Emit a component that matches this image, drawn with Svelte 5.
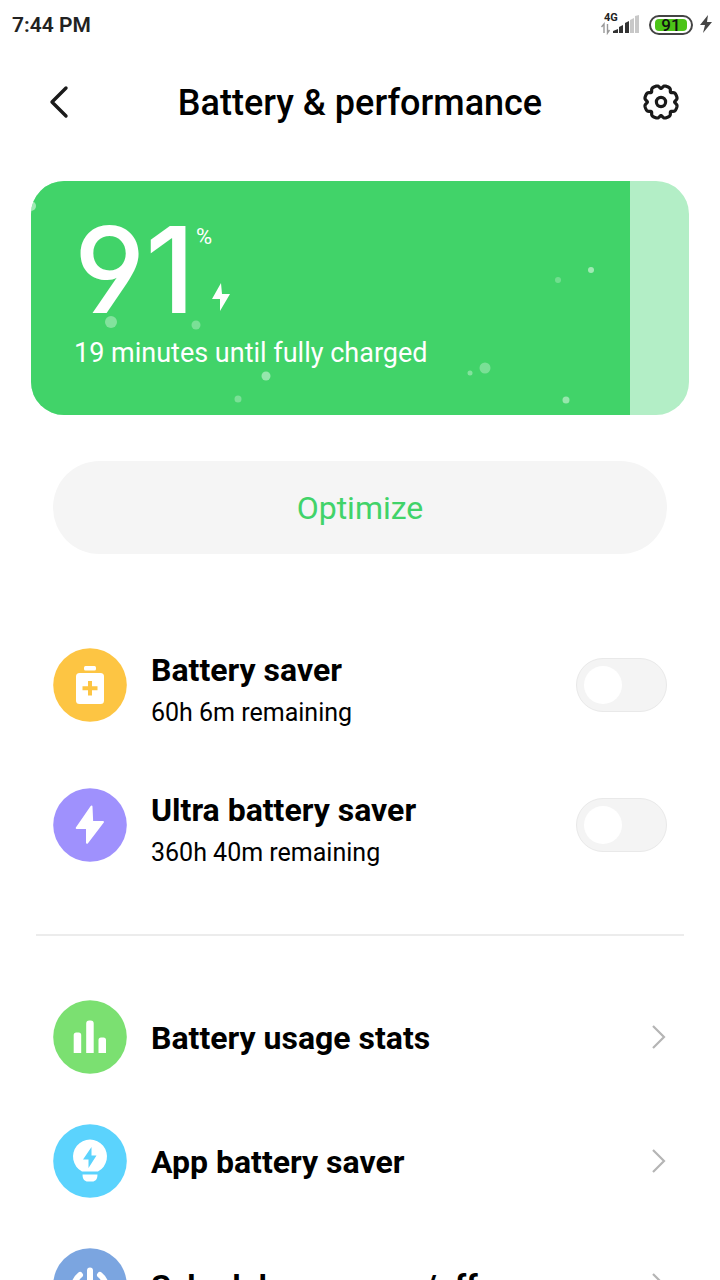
<div class="screen">
    <div class="status">
        <span class="time">{time}</span>
        <div class="status-icons">
            <div class="network">
                <span class="net-type">4G</span>
                <svg width="38" height="20" viewBox="0 0 38 20" aria-hidden="true">
                    <path d="M3 18V9L0.5 12M6.5 9v9l2-3" fill="none" stroke="#999" stroke-width="1.4" />
                    <path d="M12 18v-2l5-2v4zM18 18v-6l4-2v8zM24 18V8l4-2v12z" fill="#333" />
                    <path d="M29 18V5l4-2v15zM34 18V1l4-1v18z" fill="#c8c8c8" />
                </svg>
            </div>
            <div class="pill">
                <div class="pill-fill">{level}</div>
            </div>
            <svg width="12" height="20" viewBox="0 0 12 20" aria-hidden="true">
                <path d="M8 0L0 10h5L3 18L12 7H7z" fill="#444" />
            </svg>
        </div>
    </div>

    <header>
        <button class="icon-btn" aria-label="Back">
            <svg width="38" height="38" viewBox="0 0 38 38">
                <path d="M26 4L12 18L26 32" fill="none" stroke="#1a1a1a" stroke-width="3.4" stroke-linecap="round" stroke-linejoin="round" />
            </svg>
        </button>
        <h1>Battery &amp; performance</h1>
        <button class="icon-btn" aria-label="Settings">
            <svg width="38" height="38" viewBox="-19 -18 38 38">
                <path d={gear} fill="none" stroke="#1a1a1a" stroke-width="3.2" stroke-linejoin="round" />
                <circle r="4.6" fill="none" stroke="#1a1a1a" stroke-width="3.2" />
            </svg>
        </button>
    </header>

    <main>
        <section class="card">
            <div class="charge" style="width: {level}%"></div>
            <svg class="bubbles" viewBox="0 0 658 234" aria-hidden="true">
                {#each bubbles as b}
                    <circle cx={b.x} cy={b.y} r={b.r} fill="#fff" opacity={b.o} />
                {/each}
            </svg>
            <div class="card-text">
                <div class="level">
                    <span class="number">{level}</span>
                    <div class="level-side">
                        <span class="percent">%</span>
                        <svg width="18" height="28" viewBox="0 0 18 28" aria-hidden="true">
                            <path d="M9 0L0 16h8v12L18 11h-8z" fill="#fff" />
                        </svg>
                    </div>
                </div>
                <p>19 minutes until fully charged</p>
            </div>
        </section>

        <button class="optimize">Optimize</button>

        <div class="savers">
            {#each savers as saver}
                <label class="saver">
                    {@render icon(saver.icon)}
                    <span class="text">
                        <span class="name">{saver.name}</span>
                        <span class="remaining">{saver.remaining}</span>
                    </span>
                    <input type="checkbox" role="switch" bind:checked={saver.on}>
                </label>
            {/each}
        </div>

        <hr>

        <nav>
            {#each links as link}
                <a href="#{link.icon}">
                    {@render icon(link.icon)}
                    <span class="name">{link.name}</span>
                    <svg class="chevron" width="16" height="28" viewBox="0 0 16 28" aria-hidden="true">
                        <path d="M2 3L13 14L2 25" fill="none" stroke="#b5b5b5" stroke-width="2.2" />
                    </svg>
                </a>
            {/each}
        </nav>
    </main>
</div>

{#snippet icon(kind)}
    <svg class="icon" width="74" height="74" viewBox="0 0 74 74" aria-hidden="true">
        <circle cx="37" cy="37" r="36.8" fill={colors[kind]} />
        {#if kind === "saver"}
            <rect x="31" y="18" width="12" height="4.5" rx="1.5" fill="#fff" />
            <rect x="23" y="25" width="28" height="31" rx="3.5" fill="#fff" />
            <path d="M37 33v14.5M29.5 40.2h15" stroke={colors[kind]} stroke-width="4" />
        {:else if kind === "ultra"}
            <path d="M38.5 18.5L23.7 40H34v14.8L50 34H39.2z" fill="#fff" stroke="#fff" stroke-width="2" stroke-linejoin="round" />
        {:else if kind === "stats"}
            <path d="M20.7 53V35a2.5 2.5 0 0 1 2.5-2.5h2.5a2.5 2.5 0 0 1 2.5 2.5v18zM33.2 53V23.5a3 3 0 0 1 3-3h1.5a3 3 0 0 1 3 3V53zM45.5 53V40a2.5 2.5 0 0 1 2.5-2.5h2.5a2.5 2.5 0 0 1 2.5 2.5v13z" fill="#fff" />
        {:else if kind === "apps"}
            <path d="M29 47.5a17 17 0 1 1 16 0z" fill="#fff" />
            <path d="M29.5 50.5h15c0 5-2.5 7-5 7h-5c-2.5 0-5-2-5-7z" fill="#fff" />
            <path d="M38.5 23L30 35.5h5.5V44L43.5 31.5h-5z" fill={colors[kind]} />
        {:else}
            <path d="M37 22.5v15M27 27a16 16 0 1 0 20 0" fill="none" stroke="#fff" stroke-width="6" stroke-linecap="round" />
        {/if}
    </svg>
{/snippet}

<style>
    :global(body){
        margin: 0;
        background: #fff;
    }

    .screen{
        display: flex;
        flex-direction: column;
        height: 100vh;
        font-family: Roboto, sans-serif;
        color: #000;
    }

    button{
        border: 0;
        padding: 0;
        font-family: inherit;
        cursor: pointer;
    }

    .status{
        display: flex;
        flex: none;
        align-items: center;
        justify-content: space-between;
        height: 50px;
        padding: 0 8px 0 12px;
    }

    .time{
        font-size: 21px;
        font-weight: 600;
        color: #222;
    }

    .status-icons{
        display: flex;
        align-items: center;
        gap: 7px;
    }

    .network{
        position: relative;
        display: flex;
        margin-right: 3px;
    }

    .net-type{
        position: absolute;
        top: -3px;
        left: 3px;
        font-size: 11px;
        line-height: 12px;
        font-weight: 700;
        color: #222;
    }

    .pill{
        box-sizing: border-box;
        width: 44px;
        height: 20px;
        padding: 2px 4px;
        border: 2px solid #444;
        border-radius: 10px;
    }

    .pill-fill{
        height: 12px;
        border-radius: 4px;
        background: #4cc417;
        color: #111;
        font-size: 17px;
        line-height: 13px;
        font-weight: 500;
        text-align: center;
    }

    header{
        display: flex;
        flex: none;
        align-items: center;
        justify-content: space-between;
        height: 106px;
        padding: 0 40px;
    }

    h1{
        margin: 0;
        font-size: 36px;
        line-height: 44px;
        font-weight: 500;
    }

    .icon-btn{
        display: flex;
        background: none;
    }

    main{
        flex: 1;
        overflow-y: auto;
        scrollbar-width: none;
        padding: 25px 31px;
    }

    .card{
        position: relative;
        height: 234px;
        border-radius: 33px;
        overflow: hidden;
        background: #b3eec6;
        color: #fff;
    }

    .charge{
        position: absolute;
        inset: 0 auto 0 0;
        background: #41d369;
    }

    .bubbles{
        position: absolute;
        inset: 0;
    }

    .card-text{
        position: relative;
        padding: 32px 43px;
    }

    .level{
        display: flex;
        gap: 1px;
        height: 120px;
    }

    .number{
        font-family: Inter, sans-serif;
        font-feature-settings: "cv04";
        font-size: 120px;
        line-height: 114px;
        font-weight: 500;
    }

    .level-side{
        display: flex;
        flex-direction: column;
        justify-content: space-between;
        padding: 12px 0 22px;
    }

    .level-side svg{
        margin-left: 16px;
    }

    .percent{
        font-size: 22px;
        line-height: 24px;
    }

    .card p{
        margin: 0;
        font-size: 27px;
        line-height: 40px;
    }

    .optimize{
        display: block;
        width: calc(100% - 44px);
        height: 93px;
        margin: 46px 22px 0;
        border-radius: 47px;
        background: #f5f5f5;
        color: #41d369;
        font-size: 32px;
    }

    .savers{
        padding: 61px 22px 39px;
    }

    .saver, nav a{
        display: flex;
        align-items: center;
        gap: 24px;
    }

    .saver{
        height: 140px;
    }

    .icon{
        flex: none;
    }

    .text, nav .name{
        flex: 1;
    }

    .text{
        padding-top: 11px;
    }

    .name, .remaining{
        display: block;
    }

    .name{
        font-size: 32px;
        line-height: 44px;
        font-weight: 700;
    }

    .remaining{
        font-size: 25px;
        line-height: 42px;
    }

    nav .name{
        padding-top: 1px;
    }

    input{
        appearance: none;
        box-sizing: border-box;
        width: 91px;
        height: 54px;
        margin: 0;
        padding: 7px;
        border: 1px solid #e9e9e9;
        border-radius: 27px;
        background: #f4f4f4;
    }

    input::before{
        content: "";
        display: block;
        width: 38px;
        height: 38px;
        border-radius: 50%;
        background: #fff;
    }

    input:checked{
        background: #41d369;
    }

    input:checked::before{
        margin-left: auto;
    }

    hr{
        height: 2px;
        margin: 0 5px;
        border: 0;
        background: #ececec;
    }

    nav{
        padding: 39px 22px;
    }

    nav a{
        height: 124px;
        color: inherit;
        text-decoration: none;
    }
</style>

<script>
    const time = "7:44 PM";
    const level = 91;

    const colors = {
        saver: "#fdc543",
        ultra: "#9f91fd",
        stats: "#7be071",
        apps: "#5bd3fd",
        schedule: "#7ba5e0"
    };

    let savers = $state([
        { icon: "saver", name: "Battery saver", remaining: "60h 6m remaining", on: false },
        { icon: "ultra", name: "Ultra battery saver", remaining: "360h 40m remaining", on: false }
    ]);

    const links = [
        { icon: "stats", name: "Battery usage stats" },
        { icon: "apps", name: "App battery saver" },
        { icon: "schedule", name: "Schedule power on/off" }
    ];

    const bubbles = [
        { x: 0, y: 25, r: 5, o: 0.5 },
        { x: 80, y: 141, r: 6, o: 0.35 },
        { x: 165, y: 144, r: 4.5, o: 0.3 },
        { x: 235, y: 195, r: 4.5, o: 0.45 },
        { x: 207, y: 218, r: 3.5, o: 0.3 },
        { x: 439, y: 192, r: 2.5, o: 0.35 },
        { x: 454, y: 187, r: 5.5, o: 0.3 },
        { x: 535, y: 219, r: 3.5, o: 0.45 },
        { x: 527, y: 99, r: 3, o: 0.25 },
        { x: 560, y: 89, r: 3, o: 0.5 }
    ];

    // Eight wide teeth with narrow notches between them
    let gear = "";
    for(let i = 0; i < 320; i++){
        const a = i * Math.PI / 160;
        const notch = Math.pow((1 + Math.cos(8 * a)) / 2, 3);
        const r = 16.6 - 3 * notch;
        gear += (i ? "L" : "M") + (r * Math.cos(a)).toFixed(2) + " " + (r * Math.sin(a)).toFixed(2);
    }
    gear += "Z";
</script>
